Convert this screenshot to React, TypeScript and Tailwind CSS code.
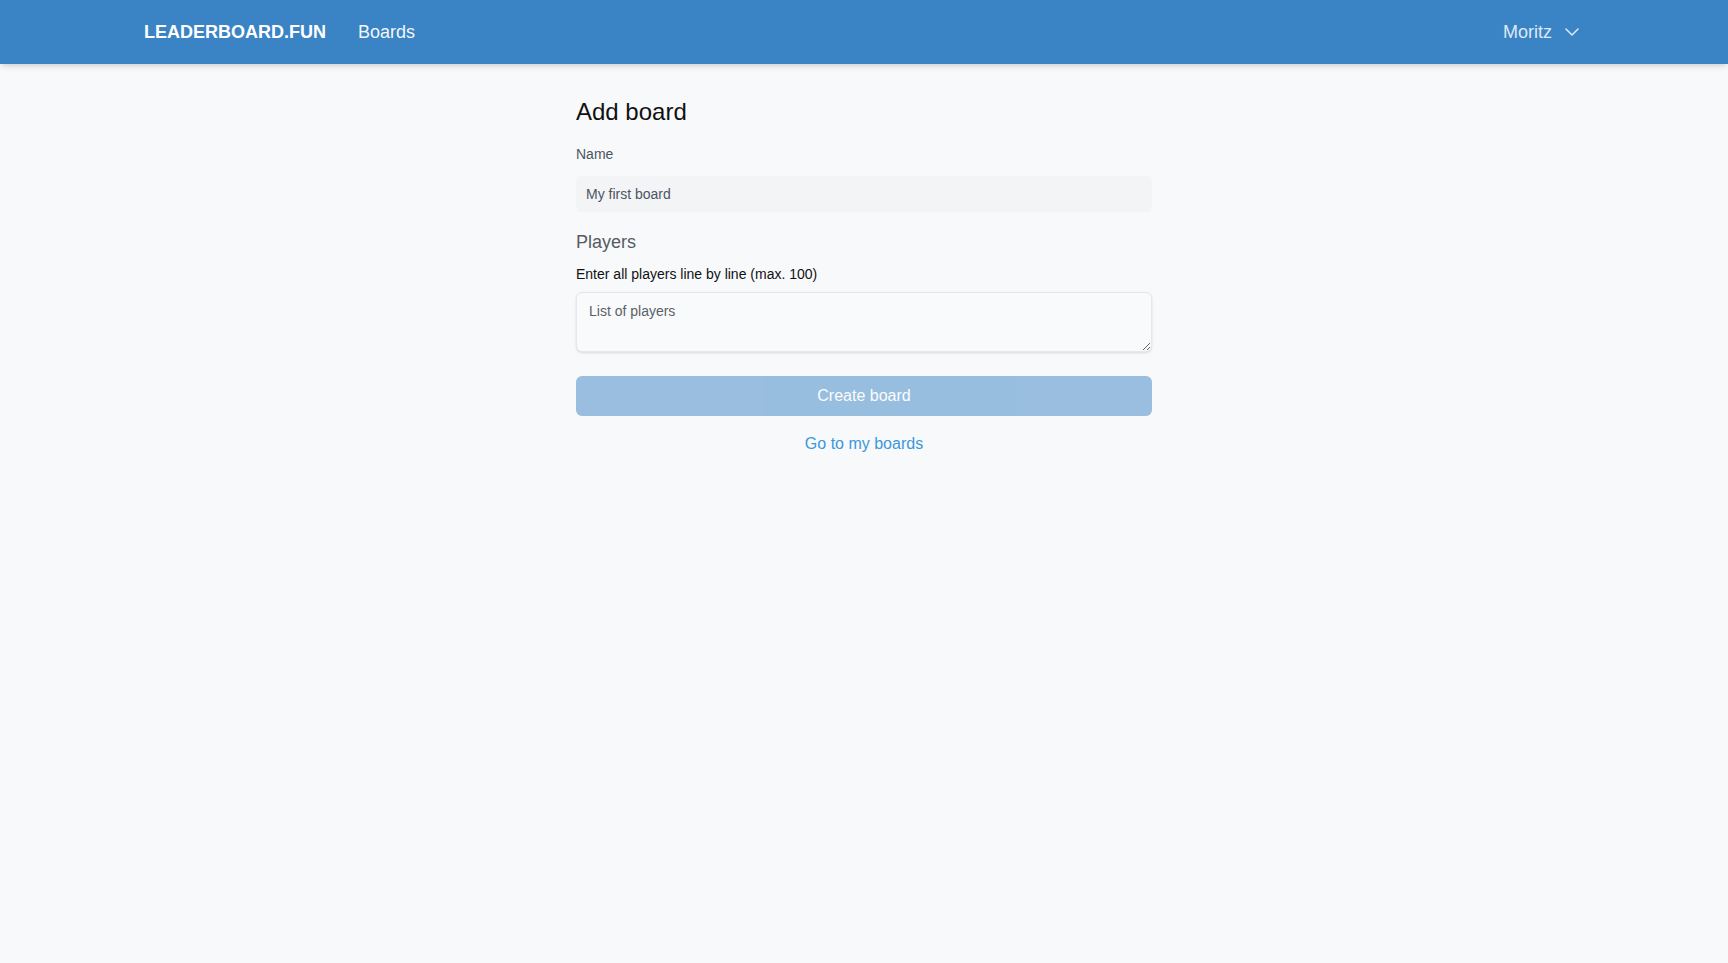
function Chevron() {
  return (
    <svg width="14" height="8" viewBox="0 0 14 8" fill="none" stroke="currentColor" strokeWidth="1.5" strokeLinecap="round" strokeLinejoin="round">
      <polyline points="1,1 7,7 13,1" />
    </svg>
  )
}

function Header() {
  return (
    <header className="h-16 bg-[#3a84c5] shadow-md">
      <div className="mx-auto flex h-full w-[1440px] items-center justify-between">
        <div className="flex items-center gap-8">
          <span className="text-lg font-bold text-white">LEADERBOARD.FUN</span>
          <a className="text-lg text-white/95">Boards</a>
        </div>
        <button className="mr-[5px] flex items-center gap-[13px] text-lg text-[#dce9f6]">
          <span>Moritz</span>
          <Chevron />
        </button>
      </div>
    </header>
  )
}

export default function App() {
  return (
    <div
      className="min-h-screen bg-[#f8f9fb]"
      style={{ fontFamily: '"Liberation Sans", Arial, sans-serif' }}
    >
      <Header />

      <main className="mx-auto w-[576px] pt-8">
        <h1 className="mb-4 text-2xl text-[#111]">Add board</h1>

        {/* Name field */}
        <label className="block text-sm text-[#4b5563]">Name</label>
        <input
          className="mt-3 h-9 w-full rounded-md bg-[#f3f4f6] px-2.5 text-sm text-[#4b5563] placeholder:text-[#4b5563] outline-none"
          placeholder="My first board"
        />

        {/* Players */}
        <h2 className="mt-4 text-lg text-[#555b63]">Players</h2>
        <p className="mt-2 text-sm text-[#111]">Enter all players line by line (max. 100)</p>
        <textarea
          className="mt-2 block h-[60px] w-full rounded-md border border-[#e5e7eb] bg-[#f9fafb] px-3 py-2 text-sm text-[#4b5563] shadow-sm placeholder:text-[#5b6168] outline-none"
          placeholder="List of players"
        />

        <button
          disabled
          className="mt-6 h-10 w-full rounded-md bg-[#3a84c5] text-base text-white opacity-50"
        >
          Create board
        </button>

        <div className="mt-4 text-center">
          <a className="text-base text-[#3b98d9]">Go to my boards</a>
        </div>
      </main>
    </div>
  )
}
